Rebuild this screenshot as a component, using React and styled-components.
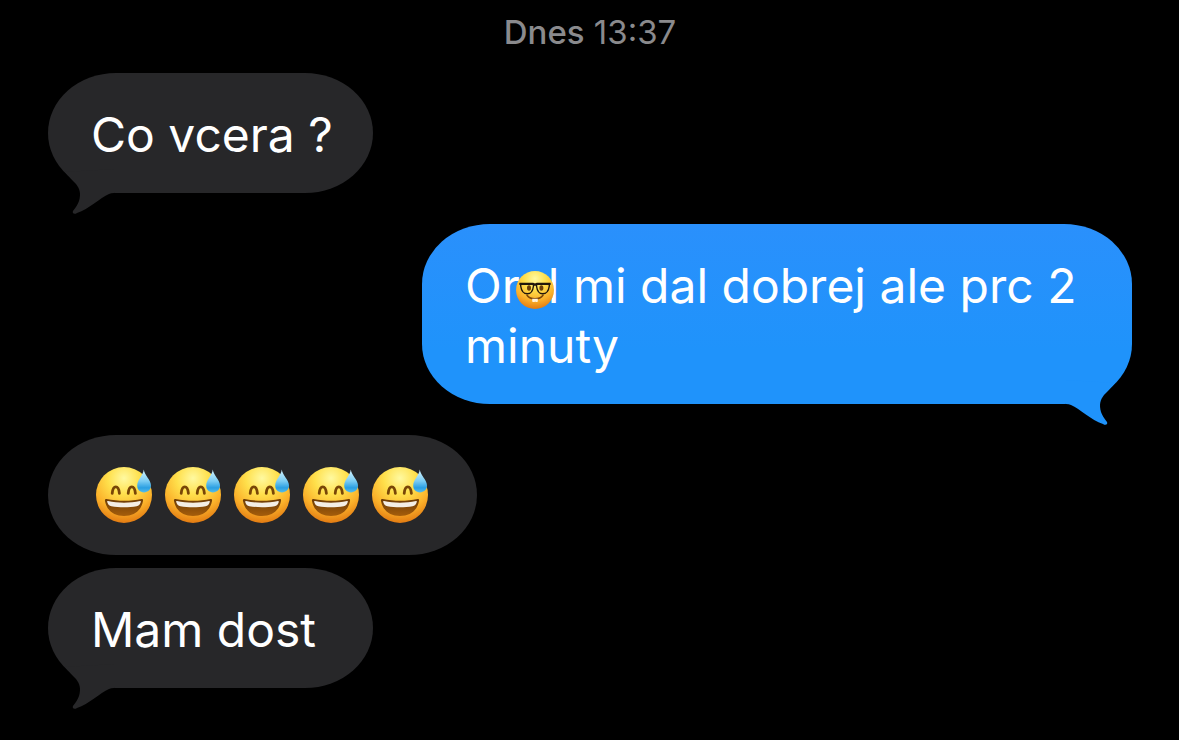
import React from 'react';
import styled, { createGlobalStyle } from 'styled-components';

const messages = [
  { id: 1, side: 'in', tail: true, body: 'Co vcera ?' },
  { id: 2, side: 'out', tail: true, body: <NerdMessage /> },
  { id: 3, side: 'in', tail: false, body: <SweatRow count={5} /> },
  { id: 4, side: 'in', tail: true, body: 'Mam dost' },
];

const App = () => {
  return (
    <>
      <GlobalStyle />
      <EmojiGradients />
      <Chat>
        <Timestamp>
          <strong>Dnes</strong> 13:37
        </Timestamp>

        <MessageList>
          {messages.map(({ id, side, tail, body }) => (
            <Message key={id} $side={side} $tail={tail}>
              <Bubble $side={side}>
                {body}
                {tail && <BubbleTail side={side} />}
              </Bubble>
            </Message>
          ))}
        </MessageList>
      </Chat>
    </>
  );
};

export default App;

function NerdMessage() {
  return (
    <>
      Or
      <NerdSlot>
        <NerdFace />
      </NerdSlot>
      l mi dal dobrej ale prc 2 minuty
    </>
  );
}

function SweatRow({ count }) {
  return (
    <EmojiRow>
      {Array.from({ length: count }, (_, i) => (
        <SweatFace key={i} />
      ))}
    </EmojiRow>
  );
}

const BubbleTail = ({ side }) => {
  return (
    <Tail $side={side} viewBox="0 0 56 48" aria-hidden="true">
      <path d="M7 3 C10 7 14 11 18 15 C22 20 23 25 21 32 C20 35 18 38 15 42 C14 44 16 46 19 44 C31 40 42 29 51 25 Q53 24 56 24 L56 0 Z" />
    </Tail>
  );
};

const EmojiGradients = () => {
  return (
    <Defs aria-hidden="true">
      <defs>
        <radialGradient id="face" cx="0.5" cy="0.2" r="0.82">
          <stop offset="0" stopColor="#fff9a0" />
          <stop offset="0.35" stopColor="#ffe04c" />
          <stop offset="0.7" stopColor="#fbb12a" />
          <stop offset="1" stopColor="#e07610" />
        </radialGradient>
        <linearGradient id="drop" x1="0" y1="0" x2="0" y2="1">
          <stop offset="0" stopColor="#d3f3ff" />
          <stop offset="0.5" stopColor="#7ccdf3" />
          <stop offset="0.8" stopColor="#2a9fe2" />
          <stop offset="1" stopColor="#55bdec" />
        </linearGradient>
        <linearGradient id="mouth" x1="0" y1="0" x2="0" y2="1">
          <stop offset="0" stopColor="#6b3b06" />
          <stop offset="1" stopColor="#a55d0b" />
        </linearGradient>
      </defs>
    </Defs>
  );
};

const SweatFace = () => {
  return (
    <Sweat viewBox="0 0 56 56" role="img" aria-label="😅">
      <circle cx="28" cy="28" r="28" fill="url(#face)" />
      <g fill="none" stroke="#784607" strokeWidth="2.8" strokeLinecap="round">
        <path d="M16.2 26.4 C17 17.6 22.6 17.6 23.4 26.4" />
        <path d="M32.2 26.4 C33 17.6 38.6 17.6 39.4 26.4" />
      </g>
      <path
        d="M10.5 32 C22 34.4 35 34.4 45.5 32 C46.8 31.8 47.3 32.7 47 34 C45 44 38 49 28 49 C18 49 11 44 9 34 C8.7 32.7 9.3 31.8 10.5 32 Z"
        fill="url(#mouth)"
      />
      <path
        d="M12 34 C22 36.2 34 36.2 44 34 C44.8 34 45 34.4 44.7 35.2 C44 37.6 42.8 38.8 40.6 39.2 C33 40.6 23 40.6 15.4 39.2 C13.2 38.8 12 37.6 11.3 35.2 C11 34.4 11.2 34 12 34 Z"
        fill="#f4eee5"
      />
      <path
        d="M47.8 2.6 C48.6 8.6 55 13 55 18.6 C55 22.6 51.8 25.4 48 25.4 C44 25.4 41.2 22.6 41.2 18.8 C41.2 13 47 8.6 47.8 2.6 Z"
        fill="url(#drop)"
      />
    </Sweat>
  );
};

const NerdFace = () => {
  return (
    <Nerd viewBox="0 0 38 38" role="img" aria-label="🤓">
      <circle cx="19" cy="19" r="19" fill="url(#face)" />
      <ellipse cx="13" cy="17" rx="2" ry="2.8" fill="#6c3e08" />
      <ellipse cx="25.4" cy="17" rx="2" ry="2.8" fill="#6c3e08" />
      <path
        d="M11 24.2 C14.5 29 23.5 29 27 24.2"
        fill="none"
        stroke="#7a4308"
        strokeWidth="1.5"
        strokeLinecap="round"
      />
      <path d="M16.2 27.8 H21.8 V30.6 Q20.4 31.6 19.2 30.6 Q17.6 31.6 16.2 30.6 Z" fill="#fff3df" />
      <g fill="none" stroke="#21170c">
        <path
          d="M4.5 12.6 H16 Q17.8 12.8 17.4 15.5 C16.8 20 15 22.8 11.4 22.8 C7.5 22.8 5.4 20 4.8 15.5 Z"
          strokeWidth="1.4"
        />
        <path
          d="M33.5 12.6 H22 Q20.2 12.8 20.6 15.5 C21.2 20 23 22.8 26.6 22.8 C30.5 22.8 32.6 20 33.2 15.5 Z"
          strokeWidth="1.4"
        />
        <path d="M3.4 12.8 H17 L19 13.8 L21 12.8 H34.6" strokeWidth="2.2" />
      </g>
    </Nerd>
  );
};

const GlobalStyle = createGlobalStyle`
  body {
    margin: 0;
    background: #000;
  }
`;

const Chat = styled.main`
  padding: 8px 47px 52px 48px;
  font-family: Inter, 'Liberation Sans', sans-serif;
  color: #fff;
`;

const Timestamp = styled.header`
  margin-bottom: 17px;
  text-align: center;
  font-size: 33px;
  line-height: 48px;
  color: #8a8a8d;

  & strong {
    font-weight: 500;
  }
`;

const MessageList = styled.ul`
  margin: 0;
  padding: 0;
  list-style-type: none;
`;

const Message = styled.li`
  display: flex;
  justify-content: ${({ $side }) => ($side === 'out' ? 'flex-end' : 'flex-start')};

  &:not(:last-child) {
    margin-bottom: ${({ $tail }) => ($tail ? '31px' : '13px')};
  }
`;

const Bubble = styled.div`
  position: relative;
  box-sizing: border-box;
  min-width: 325px;
  max-width: 710px;
  padding: 32px 40px 28px 43px;
  border-radius: 68px / 60px;
  background: ${({ $side }) =>
    $side === 'out' ? 'linear-gradient(#2a90fc, #1f93fb 70%)' : '#272729'};
  color: #fff;
  fill: ${({ $side }) => ($side === 'out' ? '#1f93fb' : '#272729')};
  font-size: 48px;
  line-height: 60px;
`;

const Tail = styled.svg`
  position: absolute;
  bottom: -24px;
  ${({ $side }) => ($side === 'out' ? 'right: 10px;' : 'left: 10px;')}
  width: 56px;
  height: 48px;
  transform: ${({ $side }) => ($side === 'out' ? 'scaleX(-1)' : 'none')};
`;

const EmojiRow = styled.div`
  display: flex;
  align-items: center;
  gap: 13px;
  height: 56px;
  padding: 0 9px 4px 5px;
`;

const Sweat = styled.svg`
  width: 56px;
  height: 56px;
`;

const NerdSlot = styled.span`
  position: relative;
  display: inline-block;
  width: 28px;
  height: 28px;
`;

const Nerd = styled.svg`
  position: absolute;
  top: -4px;
  left: -4px;
  width: 38px;
  height: 38px;
`;

const Defs = styled.svg`
  position: absolute;
  width: 0;
  height: 0;
`;
